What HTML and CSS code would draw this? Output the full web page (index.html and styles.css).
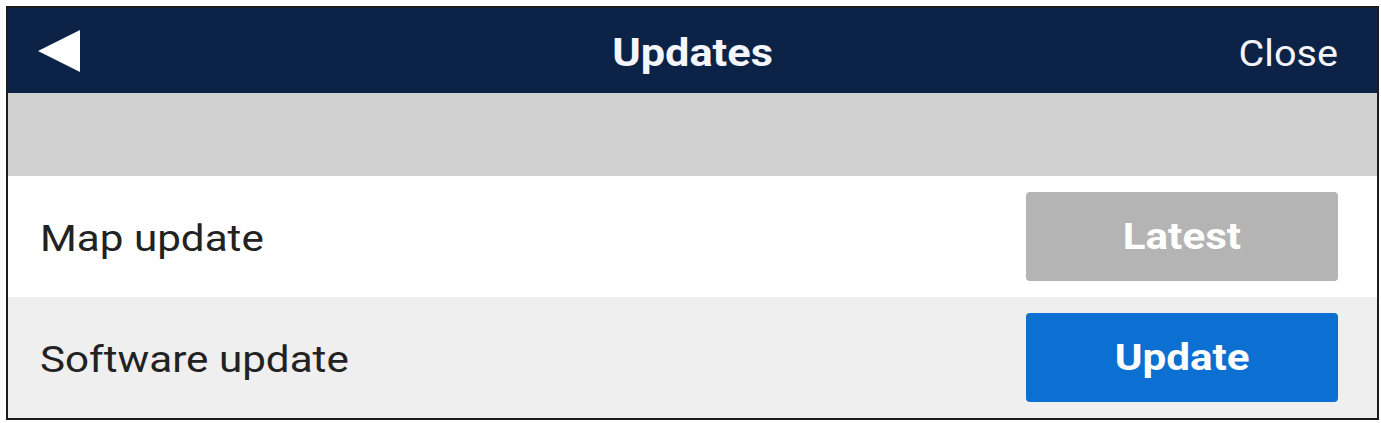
FILE: index.html
```html
<!DOCTYPE html>
<html lang="en">
<head>
    <meta charset="UTF-8">
    <meta name="viewport" content="width=device-width, initial-scale=1.0">
    <title>Updates</title>
    <link rel="stylesheet" href="styles.css">
</head>
<body>
    <div class="screen">
        <div class="topbar">
            <button class="back" aria-label="Back">
                <svg width="42" height="42" viewBox="0 0 42 42"><polygon points="0,21 42,0 42,42" fill="#fff"/></svg>
            </button>
            <h2 class="title"><span class="wide">Updates</span></h2>
            <button class="close"><span class="wide">Close</span></button>
        </div>
        <div class="band"></div>
        <div class="row">
            <span class="label wide">Map update</span>
            <button class="btn btn-latest"><span class="wide">Latest</span></button>
        </div>
        <div class="row alt">
            <span class="label wide">Software update</span>
            <button class="btn btn-update"><span class="wide">Update</span></button>
        </div>
    </div>
</body>
</html>
```
FILE: styles.css
```css
body { margin: 0; background: #fff; font-family: Roboto, "Noto Sans", sans-serif; }
.screen { box-sizing: border-box; width: 1373px; margin: 6px 0 0 6px; border: 2px solid #1c1c1c; }
/* the device font is drawn a little wider than Roboto */
.wide { display: inline-block; transform: scaleX(1.14); }
.label.wide { transform-origin: left center; }
.topbar { height: 85px; background: #0c2247; display: flex; align-items: center; justify-content: space-between; padding: 0 39px 0 30px; position: relative; }
.back { background: none; border: none; padding: 0; display: flex; cursor: pointer; }
.title { position: absolute; left: 0; right: 0; margin: 5px 0 0; text-align: center; color: #f4f6fb; font-size: 38px; font-weight: 700; pointer-events: none; }
.close { background: none; border: none; padding: 0; margin-top: 6px; color: #f4f6fb; font-family: inherit; font-size: 37px; cursor: pointer; }
.close .wide { transform: scaleX(1.07); transform-origin: right center; }
.band { height: 83px; background: #d1d1d1; }
.row { height: 121px; display: flex; align-items: center; justify-content: space-between; padding: 0 39px 0 32px; background: #fff; }
.row.alt { background: #efefef; }
.label { font-size: 37px; color: #222; margin-top: 3px; }
.btn { width: 312px; height: 89px; border: none; border-radius: 4px; color: #fff; font-family: inherit; font-size: 37px; font-weight: 700; cursor: pointer; }
.btn-latest { background: #b4b4b4; }
.btn-update { background: #0b70d2; }
```
